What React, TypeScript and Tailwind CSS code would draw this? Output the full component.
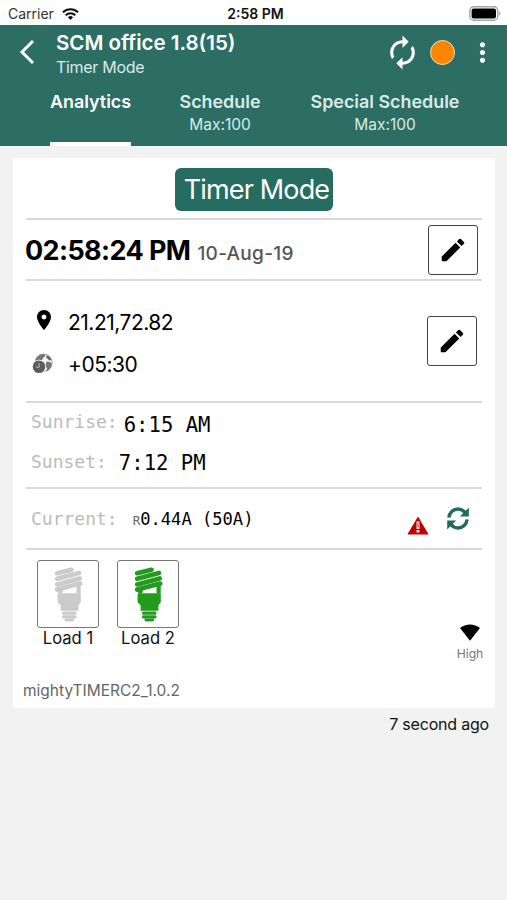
import type { ReactNode } from 'react'
import { MdAutorenew, MdEdit, MdLocationOn, MdMoreVert } from 'react-icons/md'

const mono = "font-['DejaVu_Sans_Mono',monospace]"

function WifiIcon() {
  return (
    <svg width="17" height="12" viewBox="0 0 17 12" fill="none" stroke="#111" strokeWidth="2.1">
      <path d="M.9 4.3a10.9 10.9 0 0 1 15.2 0" />
      <path d="M3.7 7.2a6.9 6.9 0 0 1 9.6 0" />
      <path d="M8.5 12 5.9 9.3a3.7 3.7 0 0 1 5.2 0z" fill="#111" stroke="none" />
    </svg>
  )
}

function BatteryIcon() {
  return (
    <svg width="32" height="15" viewBox="0 0 32 15">
      <rect x=".8" y=".8" width="28" height="13.4" rx="4" fill="#fff" stroke="#a5a5a5" strokeWidth="1.4" />
      <rect x="2.6" y="2.6" width="24.4" height="9.8" rx="2" fill="#000" />
      <path d="M30.2 5.2c1.6.7 1.6 3.9 0 4.6z" fill="#999" />
    </svg>
  )
}

function TimezoneIcon() {
  return (
    <svg width="21" height="21" viewBox="0 0 21 21">
      <circle cx="11.6" cy="9.6" r="8.6" fill="#f4f4f4" stroke="#999" strokeWidth=".8" />
      <path d="M3.6 6.2C5.4 2.6 8.6.9 12 1l1.6 1.8-2.2 1.6-1.6 2.8-3-.6-2.4 1.5z" fill="#777" />
      <path d="m14.6 2.2 3.2 1.6 1.8 3.2-2.2.4-1.8-1.6-1.4-1.4z" fill="#666" />
      <path d="m14.4 8.4 3.4.6 2.2 1.2-.8 4-2.6 3.4-2.4.8.8-3-1.6-2.6z" fill="#777" />
      <circle cx="7" cy="13.8" r="6.9" fill="#fff" />
      <circle cx="7" cy="13.8" r="6.3" fill="#5c5c5c" />
      <path d="M7.2 10.2v4H4" fill="none" stroke="#bbb" strokeWidth="1" />
    </svg>
  )
}

function WarningIcon() {
  return (
    <svg width="22" height="19" viewBox="0 0 22 19">
      <path d="M11 .4 21.7 18.6H.3z" fill="#c00000" />
      <path d="M9.5 5.5h3V13h-3zM9.5 14h3v2.500h-3z" fill="#fbe6e6" />
      <path d="M10.6 6.8h.8v4.800h-.8z" fill="#c00000" />
    </svg>
  )
}

function ReloadIcon() {
  return (
    <svg width="22" height="23" viewBox="0 0 22 23">
      <g fill="none" stroke="#246b5c" strokeWidth="3.4">
        <path d="M1.9 10.600C2.300 5.600 6.200 2 11 2c3 0 5.400 1.300 7.200 3.700" />
        <path d="M20.100 12.400C19.700 17.400 15.800 21 11 21c-3 0-5.400-1.300-7.200-3.700" />
      </g>
      <path d="M21.800.6v9h-9z" fill="#246b5c" />
      <path d="M.2 22.400v-9h9z" fill="#246b5c" />
    </svg>
  )
}

function BulbIcon({ color }: { color: string }) {
  return (
    <svg width="29" height="55" viewBox="0 0 29 55" fill={color}>
      <g fill="none" stroke={color} strokeWidth="4.7" strokeLinecap="round">
        <path d="M3.2 6.2 17.5 2.8" />
        <path d="M3.2 11.8 25 6" />
        <path d="M3.2 17.4 25.7 11.4" />
        <path d="M3.2 22.6 26.2 16.6" />
      </g>
      <path d="M1.2 22.5 9.5 21.5 8.3 26.5H5zM22.5 18h4.2v8.5h-4.2z" />
      <path d="M3.6 27.5c0-.8.5-1.200 1.300-1.200h20.600c.8 0 1.300.4 1.300 1.200v7c0 1.700-1.700 2.600-2.400 4v5.200H6.600v-5.200c-.7-1.400-3-2.300-3-4z" />
      <rect x="8.1" y="44.4" width="14.3" height="3.4" rx="1.3" />
      <rect x="8.1" y="48.2" width="14.3" height="3.4" rx="1.3" />
      <path d="M10.5 51.6h9.500v1.200c0 1-.8 1.700-1.700 1.700h-6.100c-.9 0-1.700-.7-1.700-1.700z" />
    </svg>
  )
}

function SignalIcon() {
  return (
    <svg width="24" height="20" viewBox="0 0 24 20">
      <path d="M.3 4.8C7-.7 17-.7 23.7 4.8L12 19.6z" fill="#000" />
    </svg>
  )
}

function EditButton() {
  return (
    <button className="flex size-[50px] items-center justify-center rounded-[3px] border-[1.5px] border-[#444] bg-white text-black">
      <MdEdit size={30} />
    </button>
  )
}

function Tab({ label, sub, active, className }: { label: string; sub?: string; active?: boolean; className: string }) {
  return (
    <div className={`flex h-full flex-col items-center whitespace-nowrap ${active ? 'border-b-4 border-white text-white' : 'text-[#d9ebe7]'} ${className}`}>
      <span className="text-[17.9px] leading-[25px] font-semibold">{label}</span>
      {sub && <span className="text-[15.5px] leading-[22px]">{sub}</span>}
    </div>
  )
}

function Row({ className, children }: { className: string; children: ReactNode }) {
  return <div className={`border-b-2 border-[#d9d9d9] ${className}`}>{children}</div>
}

function Load({ name, color }: { name: string; color: string }) {
  return (
    <div className="flex w-[62px] flex-col items-center">
      <div className="flex h-[68px] w-[62px] items-center justify-center rounded-[3px] border-[1.5px] border-[#777]">
        <BulbIcon color={color} />
      </div>
      <span className="text-[16.6px] leading-[20px] whitespace-nowrap text-[#111]">{name}</span>
    </div>
  )
}

export default function App() {
  return (
    <div className="h-[900px] w-[507px] overflow-hidden bg-[#f2f2f2] font-['Inter',sans-serif] text-black">
      <div className="grid h-[25px] grid-cols-3 items-center bg-white pt-[2px] pr-[6px] pl-[8px] text-[14px] leading-none">
        <div className="flex items-center gap-[8px] text-[#333]">
          <span>Carrier</span>
          <WifiIcon />
        </div>
        <span className="pl-[2px] text-center font-semibold text-[#111]">2:58 PM</span>
        <div className="flex justify-end">
          <BatteryIcon />
        </div>
      </div>

      <header className="flex h-[121px] flex-col bg-[#2c6e63] text-white">
        <div className="flex h-[64px] items-start">
          <svg className="mt-[14px] ml-[19px]" width="16" height="26" viewBox="0 0 16 26" fill="none" stroke="#fff" strokeWidth="3">
            <path d="M14 2 3 13l11 11" />
          </svg>
          <div className="mt-[5px] ml-[21px] flex flex-col whitespace-nowrap">
            <span className="text-[20.5px] leading-[26px] font-semibold">SCM office 1.8(15)</span>
            <span className="text-[16px] leading-[22px] tracking-[-0.3px] text-[#d9ebe7]">Timer Mode</span>
          </div>
          <div className="mt-[9px] mr-[9px] ml-auto flex items-center">
            <MdAutorenew size={37} />
            <div className="ml-[9px] size-[25px] rounded-full border border-[#f5dcb8] bg-[#ff8400]" />
            <MdMoreVert className="ml-[12px]" size={31} />
          </div>
        </div>
        <div className="flex h-[57px]">
          <Tab label="Analytics" active className="ml-[50px] w-[81px]" />
          <Tab label="Schedule" sub="Max:100" className="ml-[49px] w-[80px]" />
          <Tab label="Special Schedule" sub="Max:100" className="ml-[50px] w-[150px]" />
        </div>
      </header>

      <main className="mt-[12px] ml-[13px] h-[550px] w-[482px] bg-white px-[13px]">
        <Row className="flex h-[62px] justify-center pt-[10px]">
          <div className="flex h-[43px] w-[158px] items-center justify-center rounded-[6px] bg-[#266c60] pt-[2px] pl-[5px] text-[27px] tracking-[-0.85px] whitespace-nowrap text-white">
            Timer Mode
          </div>
        </Row>

        <Row className="flex h-[61px] items-center pr-[4px]">
          <div className="mt-[4px] flex items-baseline gap-[7px] whitespace-nowrap">
            <span className="-ml-px text-[27px] font-bold tracking-[-0.6px]">02:58:24 PM</span>
            <span className="text-[19px] font-medium tracking-[0.3px] text-[#555]">10-Aug-19</span>
          </div>
          <div className="ml-auto">
            <EditButton />
          </div>
        </Row>

        <Row className="flex h-[122px] items-center pr-[5px]">
          <div className="flex flex-col gap-[14px] pl-[6px] text-[21px] leading-[28px] tracking-[-0.5px]">
            <div className="flex items-center">
              <MdLocationOn size={24} />
              <span className="mt-[3px] -mb-[3px] ml-[12px]">21.21,72.82</span>
            </div>
            <div className="flex items-center">
              <span className="mt-[2px] w-[24px]">
                <TimezoneIcon />
              </span>
              <span className="mt-[3px] -mb-[3px] ml-[12px]">+05:30</span>
            </div>
          </div>
          <div className="ml-auto">
            <EditButton />
          </div>
        </Row>

        <Row className={`flex h-[86px] flex-col pt-[6px] pl-[5px] ${mono}`}>
          <div className="flex h-[38px]">
            <span className="text-[18px] leading-[26px] text-[#bbb]">Sunrise:</span>
            <span className="ml-[6px] text-[20.6px] leading-[32px]">6:15 AM</span>
          </div>
          <div className="flex h-[38px]">
            <span className="text-[18px] leading-[30px] text-[#bbb]">Sunset:</span>
            <span className="ml-[12px] text-[20.6px] leading-[32px]">7:12 PM</span>
          </div>
        </Row>

        <Row className={`flex h-[61px] items-center pl-[5px] ${mono}`}>
          <span className="text-[18px] text-[#bbb]">Current:</span>
          <div className="mt-[2px] ml-[15px] flex items-baseline">
            <span className="text-[12.5px] text-[#666]">R</span>
            <span className="text-[17.1px]">0.44A (50A)</span>
          </div>
          <div className="mt-[14px] ml-auto">
            <WarningIcon />
          </div>
          <div className="mr-[13px] ml-[18px]">
            <ReloadIcon />
          </div>
        </Row>

        <div className="flex h-[112px] gap-[18px] pt-[10px] pl-[11px]">
          <Load name="Load 1" color="#cbcbcb" />
          <Load name="Load 2" color="#229a1e" />
          <div className="mt-[64px] mr-[-3px] ml-auto flex w-[30px] flex-col items-center">
            <SignalIcon />
            <span className="mt-[5px] text-[12.2px] leading-[16px] text-[#777]">High</span>
          </div>
        </div>
        <div className="mt-[19px] ml-[-3px] text-[15.5px] leading-[20px] text-[#666]">mightyTIMERC2_1.0.2</div>
      </main>

      <div className="mt-[6px] pr-[18px] text-right text-[16px] leading-[20px] tracking-[-0.2px] text-[#111]">7 second ago</div>
    </div>
  )
}
